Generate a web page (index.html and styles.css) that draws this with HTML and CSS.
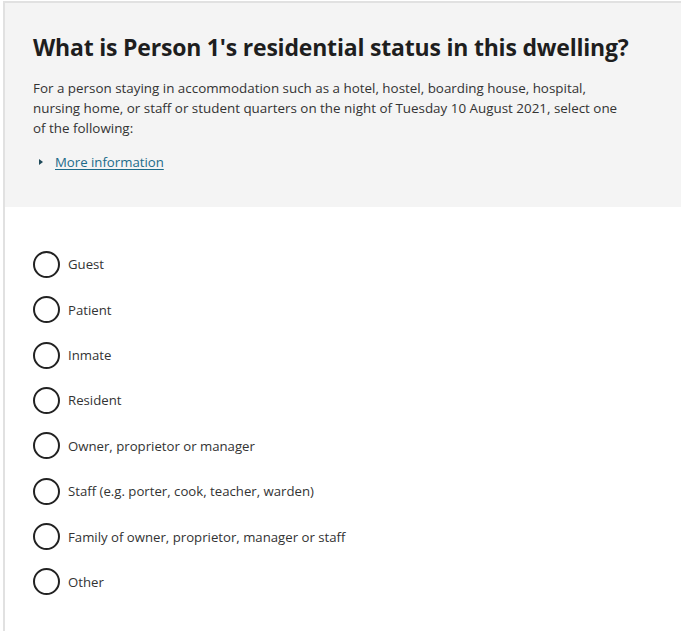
FILE: index.html
```html
<!DOCTYPE html>
<html lang="en">
<head>
<meta charset="utf-8">
<title>Residential status</title>
<link rel="stylesheet" href="styles.css">
</head>
<body>
<div class="frame">
  <section class="panel">
    <h1 class="title">What is Person 1's residential status in this dwelling?</h1>
    <p class="desc">For a person staying in accommodation such as a hotel, hostel, boarding house, hospital, nursing home, or staff or student quarters on the night of Tuesday 10 August 2021, select one of the following:</p>
    <a class="more" href="#"><span class="tri"></span><span class="more-text">More information</span></a>
  </section>
  <ul class="options">
    <li class="option"><span class="radio"></span><span class="label">Guest</span></li>
    <li class="option"><span class="radio"></span><span class="label">Patient</span></li>
    <li class="option"><span class="radio"></span><span class="label">Inmate</span></li>
    <li class="option"><span class="radio"></span><span class="label">Resident</span></li>
    <li class="option"><span class="radio"></span><span class="label">Owner, proprietor or manager</span></li>
    <li class="option"><span class="radio"></span><span class="label">Staff (e.g. porter, cook, teacher, warden)</span></li>
    <li class="option"><span class="radio"></span><span class="label">Family of owner, proprietor, manager or staff</span></li>
    <li class="option"><span class="radio"></span><span class="label">Other</span></li>
  </ul>
</div>
</body>
</html>
```
FILE: styles.css
```css
html, body {
  margin: 0;
  padding: 0;
  background: #fff;
}
body {
  font-family: "Open Sans", "Noto Sans", sans-serif;
  color: #222;
  width: 681px;
  height: 631px;
  overflow: hidden;
}
.frame {
  margin: 1px 0 0 3px;
  border-top: 2px solid #e1e1e1;
  border-left: 2px solid #e1e1e1;
  height: 640px;
}
.panel {
  background: #f4f4f4;
  height: 204px;
  box-sizing: border-box;
  padding: 28px 20px 0 28px;
}
.title {
  margin: 0;
  font-size: 23px;
  font-weight: 700;
  color: #1e1e1e;
  line-height: 32px;
  letter-spacing: -0.2px;
}
.desc {
  margin: 15px 0 0;
  font-size: 13.4px;
  line-height: 20px;
  color: #333;
  width: 592px;
}
.more {
  display: flex;
  align-items: center;
  margin-top: 15px;
  text-decoration: none;
}
.tri {
  width: 0;
  height: 0;
  border-top: 3.5px solid transparent;
  border-bottom: 3.5px solid transparent;
  border-left: 4px solid #1f4a5a;
  margin: 0 12px 0 6px;
}
.more-text {
  font-size: 13.2px;
  color: #1c6b8a;
  text-decoration: underline;
  text-underline-offset: 2px;
}
.options {
  list-style: none;
  margin: 0;
  padding: 44px 0 0 28px;
  display: flex;
  flex-direction: column;
  gap: 18.9px;
}
.option {
  display: flex;
  align-items: center;
  height: 26.5px;
}
.radio {
  width: 23px;
  height: 23px;
  border: 2px solid #222;
  border-radius: 50%;
  margin-right: 8px;
  flex: none;
}
.label {
  font-size: 13.2px;
  color: #333;
}
```
